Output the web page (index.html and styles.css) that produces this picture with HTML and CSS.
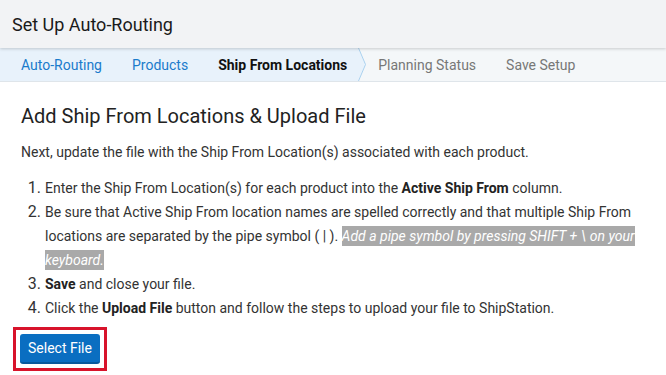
FILE: index.html
```html
<!DOCTYPE html>
<html lang="en">
<head>
  <meta charset="UTF-8">
  <title>Set Up Auto-Routing</title>
  <link rel="stylesheet" href="styles.css">
</head>
<body>
  <div class="header">
    <h1>Set Up Auto-Routing</h1>
  </div>

  <div class="steps">
    <div class="steps-done">
      <a class="step done">Auto-Routing</a>
      <a class="step done">Products</a>
      <span class="step current">Ship From Locations</span>
    </div>
    <svg class="chevron" width="9" height="33" viewBox="0 0 9 33">
      <path d="M0 0 L7 16.5 L0 33 Z" fill="#e8f2fb"/>
      <path d="M0.5 0 L7.5 16.5 L0.5 33" fill="none" stroke="#a9d1ef" stroke-width="1"/>
    </svg>
    <span class="step todo first">Planning Status</span>
    <span class="step todo">Save Setup</span>
  </div>

  <div class="content">
    <h2>Add Ship From Locations &amp; Upload File</h2>

    <p>Next, update the file with the Ship From Location(s) associated with each product.</p>

    <ol>
      <li>Enter the Ship From Location(s) for each product into the <b>Active Ship From</b> column.</li>
      <li>Be sure that Active Ship From location names are spelled correctly and that multiple Ship From locations are separated by the pipe symbol ( | ). <span class="hint">Add a pipe symbol by pressing SHIFT + \ on your keyboard.</span></li>
      <li><b>Save</b> and close your file.</li>
      <li>Click the <b>Upload File</b> button and follow the steps to upload your file to ShipStation.</li>
    </ol>

    <div class="callout">
      <button class="btn">Select File</button>
    </div>
  </div>
</body>
</html>
```

FILE: styles.css
```css
body {
  margin: 0;
  font-family: 'Roboto', 'Liberation Sans', sans-serif;
  color: #333;
  background: #fff;
}
.header {
  height: 48px;
  background-color: #f2f3f5;
  padding: 0 12px;
  display: flex;
  align-items: center;
  position: relative;
  box-shadow: 0 1px 3px rgba(0,0,0,0.18);
}
.header h1 {
  margin: 0;
  font-size: 18px;
  font-weight: 400;
  color: #1a1a1a;
}
.steps {
  display: flex;
  height: 33px;
  background-color: #f4f7f9;
  border-bottom: 1px solid #dfe5ea;
  font-size: 14px;
}
.steps-done {
  display: flex;
  padding-left: 6px;
  background-color: #e8f2fb;
}
.step {
  display: flex;
  align-items: center;
  padding: 1px 15px 0;
  white-space: nowrap;
}
.step.done {
  color: #1a7bcb;
}
.step.current {
  color: #111;
  font-weight: 700;
  padding-right: 11px;
}
.chevron {
  display: block;
  flex: none;
}
.step.todo {
  color: #777;
}
.step.todo.first {
  padding-left: 11px;
}
.content {
  padding: 0 21px;
}
.content h2 {
  margin: 22px 0 0;
  font-size: 20px;
  font-weight: 400;
  color: #222;
}
.content p {
  margin: 12px 0 0;
  font-size: 14px;
  line-height: 24px;
}
ol {
  margin: 12px 0 0;
  padding-left: 24px;
  font-size: 14px;
  line-height: 24px;
}
ol li {
  height: auto;
}
ol li::marker {
  font-size: 16px;
}
ol b {
  font-weight: 700;
  color: #222;
}
.hint {
  background-color: #a9a9a9;
  color: #fff;
  font-style: italic;
  padding: 2px 0;
}
.callout {
  display: inline-block;
  margin: 7px 0 0 -8px;
  padding: 4px;
  border: 3px solid #d8132b;
}
.btn {
  display: block;
  width: 80px;
  height: 30px;
  border: none;
  border-radius: 3px;
  background-color: #0a6ec1;
  border-bottom: 2px solid #08599c;
  color: #fff;
  font-family: 'Roboto', 'Liberation Sans', sans-serif;
  font-size: 14px;
  cursor: pointer;
}
```
